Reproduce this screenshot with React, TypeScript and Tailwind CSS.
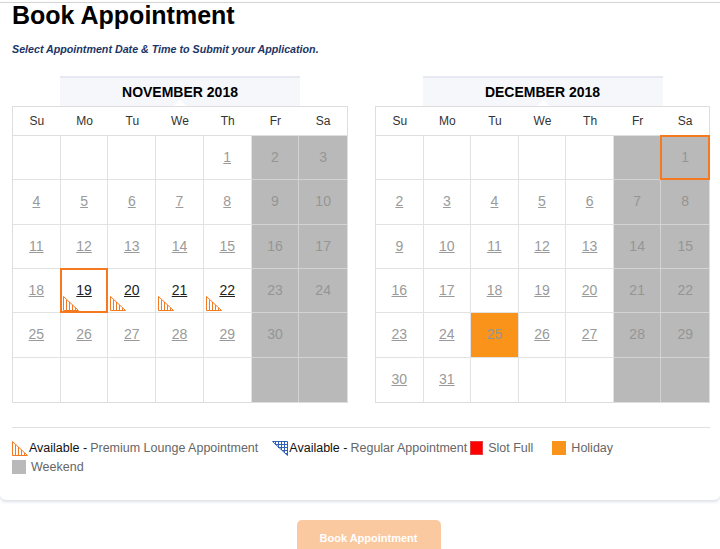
import React from "react";

type Cell = {
  day?: number;
  weekend?: boolean;
  available?: boolean;
  holiday?: boolean;
  selected?: boolean;
};

const DAY_NAMES = ["Su", "Mo", "Tu", "We", "Th", "Fr", "Sa"];

function buildMonth(
  startDay: number,
  days: number,
  opts: { available?: number[]; holiday?: number[]; selected?: number[] }
): Cell[] {
  const cells: Cell[] = [];
  for (let i = 0; i < 42; i++) {
    const d = i - startDay + 1;
    const col = i % 7;
    const weekend = col >= 5;
    if (d < 1 || d > days) {
      cells.push({ weekend });
    } else {
      cells.push({
        day: d,
        weekend,
        available: opts.available?.includes(d),
        holiday: opts.holiday?.includes(d),
        selected: opts.selected?.includes(d),
      });
    }
  }
  return cells;
}

function PremiumMark({ className = "" }: { className?: string }) {
  const lines = [3.5, 6.5, 9.5, 12.5];
  return (
    <svg
      width="16"
      height="15"
      viewBox="0 0 16 15"
      className={className}
      shapeRendering="crispEdges"
    >
      {lines.map((x) => (
        <line
          key={x}
          x1={x}
          x2={x}
          y1={0.5 + (13.5 * x) / 15}
          y2={14}
          stroke="#f47920"
          strokeWidth="1"
        />
      ))}
      <polygon
        points="0.5,0.5 0.5,14.5 15.5,14.5"
        fill="none"
        stroke="#f47920"
        strokeWidth="1"
        shapeRendering="geometricPrecision"
      />
    </svg>
  );
}

function RegularMark() {
  const ticks = [3.5, 6.5, 9.5, 12.5];
  return (
    <svg width="16" height="15" viewBox="0 0 16 15" shapeRendering="crispEdges">
      {ticks.map((t) => (
        <line
          key={"v" + t}
          x1={t}
          x2={t}
          y1={0.5}
          y2={(t * 14) / 15 + 0.5}
          stroke="#2f62b6"
        />
      ))}
      {ticks.map((t) => (
        <line
          key={"h" + t}
          x1={(t * 15) / 14}
          x2={15.5}
          y1={t}
          y2={t}
          stroke="#2f62b6"
        />
      ))}
      <polygon
        points="0.5,0.5 15.5,0.5 15.5,14.5"
        fill="none"
        stroke="#2f62b6"
        shapeRendering="geometricPrecision"
      />
    </svg>
  );
}

function Calendar({ title, cells }: { title: string; cells: Cell[] }) {
  return (
    <div>
      <div className="relative mx-auto w-[240px] h-[30px] border-t-2 border-[#e7e9f2] bg-[#f6f7fb] flex items-center justify-center text-[14px] font-bold text-black">
        {title}
        <span className="absolute bottom-0 left-1/2 -ml-[6px] w-0 h-0 border-x-[6px] border-x-transparent border-b-[6px] border-b-white" />
      </div>
      <div className="border border-[#dedede]">
        <div className="grid grid-cols-7 h-[29px] border-b border-[#dedede] bg-white">
          {DAY_NAMES.map((n) => (
            <div
              key={n}
              className="flex items-center justify-center text-[12px] text-[#333]"
            >
              {n}
            </div>
          ))}
        </div>
        <div className="grid grid-cols-7">
          {cells.map((c, i) => {
            const col = i % 7;
            let bg = "bg-white";
            if (c.holiday) bg = "bg-[#fa9319]";
            else if (c.weekend) bg = "bg-[#b9b9b9]";
            const border =
              c.weekend && !c.holiday ? "border-[#d3d3d3]" : "border-[#e2e2e2]";
            return (
              <div
                key={i}
                className={`relative h-[44.3px] flex items-center justify-center ${bg} ${border} ${
                  col < 6 ? "border-r" : ""
                } ${i < 35 ? "border-b" : ""}`}
              >
                {c.day !== undefined && (
                  <span
                    className={`text-[14px] ${
                      c.available
                        ? "text-[#222] underline"
                        : c.weekend || c.holiday
                        ? "text-[#959595]"
                        : "text-[#9a9a9a] underline"
                    }`}
                  >
                    {c.day}
                  </span>
                )}
                {c.available && (
                  <PremiumMark className="absolute left-[2px] bottom-[1px]" />
                )}
                {c.selected && (
                  <span className="absolute -inset-px border-2 border-[#f47920]" />
                )}
              </div>
            );
          })}
        </div>
      </div>
    </div>
  );
}

export default function App() {
  const november = buildMonth(4, 30, {
    available: [19, 20, 21, 22],
    selected: [19],
  });
  const december = buildMonth(6, 31, { holiday: [25], selected: [1] });

  return (
    <div className="w-[720px] h-[549px] overflow-hidden bg-white font-['Liberation_Sans',Arial,sans-serif]">
      <div className="mt-[2px] border-t border-[#d4d4d4] rounded-b-[6px] shadow-[0_2px_3px_rgba(160,165,190,0.35)] pb-[23px]">
        <h1 className="pl-3 text-[25px] leading-[25px] font-bold text-black">
          Book Appointment
        </h1>
        <p className="pl-3 mt-[13px] text-[10.7px] font-bold italic text-[#1c3566]">
          Select Appointment Date &amp; Time to Submit your Application.
        </p>
        <div className="mt-[19px] pl-3 pr-[10px] grid grid-cols-[336px_335px] gap-[27px]">
          <Calendar title="NOVEMBER 2018" cells={november} />
          <Calendar title="DECEMBER 2018" cells={december} />
        </div>
        <div className="mt-[24px] ml-3 mr-[10px] border-t border-[#e0e0e0]" />
        <div className="pl-3 pt-[11px] text-[12.5px] leading-[19px] text-[#666]">
          <div className="flex items-center">
            <PremiumMark />
            <span className="ml-[1px] text-[#111]">Available -</span>
            <span className="ml-[3px]">Premium Lounge Appointment</span>
            <span className="ml-[14px]">
              <RegularMark />
            </span>
            <span className="ml-[1px] text-[#111]">Available -</span>
            <span className="ml-[3px]">Regular Appointment</span>
            <span className="ml-[3px] w-[13px] h-[14px] bg-[#ff0000] border border-[#e04040]" />
            <span className="ml-[5px]">Slot Full</span>
            <span className="ml-[19px] w-[14px] h-[14px] bg-[#fa9319]" />
            <span className="ml-[5px]">Holiday</span>
          </div>
          <div className="flex items-center">
            <span className="w-[14px] h-[14px] bg-[#b9b9b9]" />
            <span className="ml-[5px]">Weekend</span>
          </div>
        </div>
      </div>
      <div className="mt-[20px] pl-[17px] flex justify-center">
        <button className="w-[144px] h-[36px] rounded-[5px] bg-[#fbc9a0] text-white text-[11px] font-bold">
          Book Appointment
        </button>
      </div>
    </div>
  );
}
